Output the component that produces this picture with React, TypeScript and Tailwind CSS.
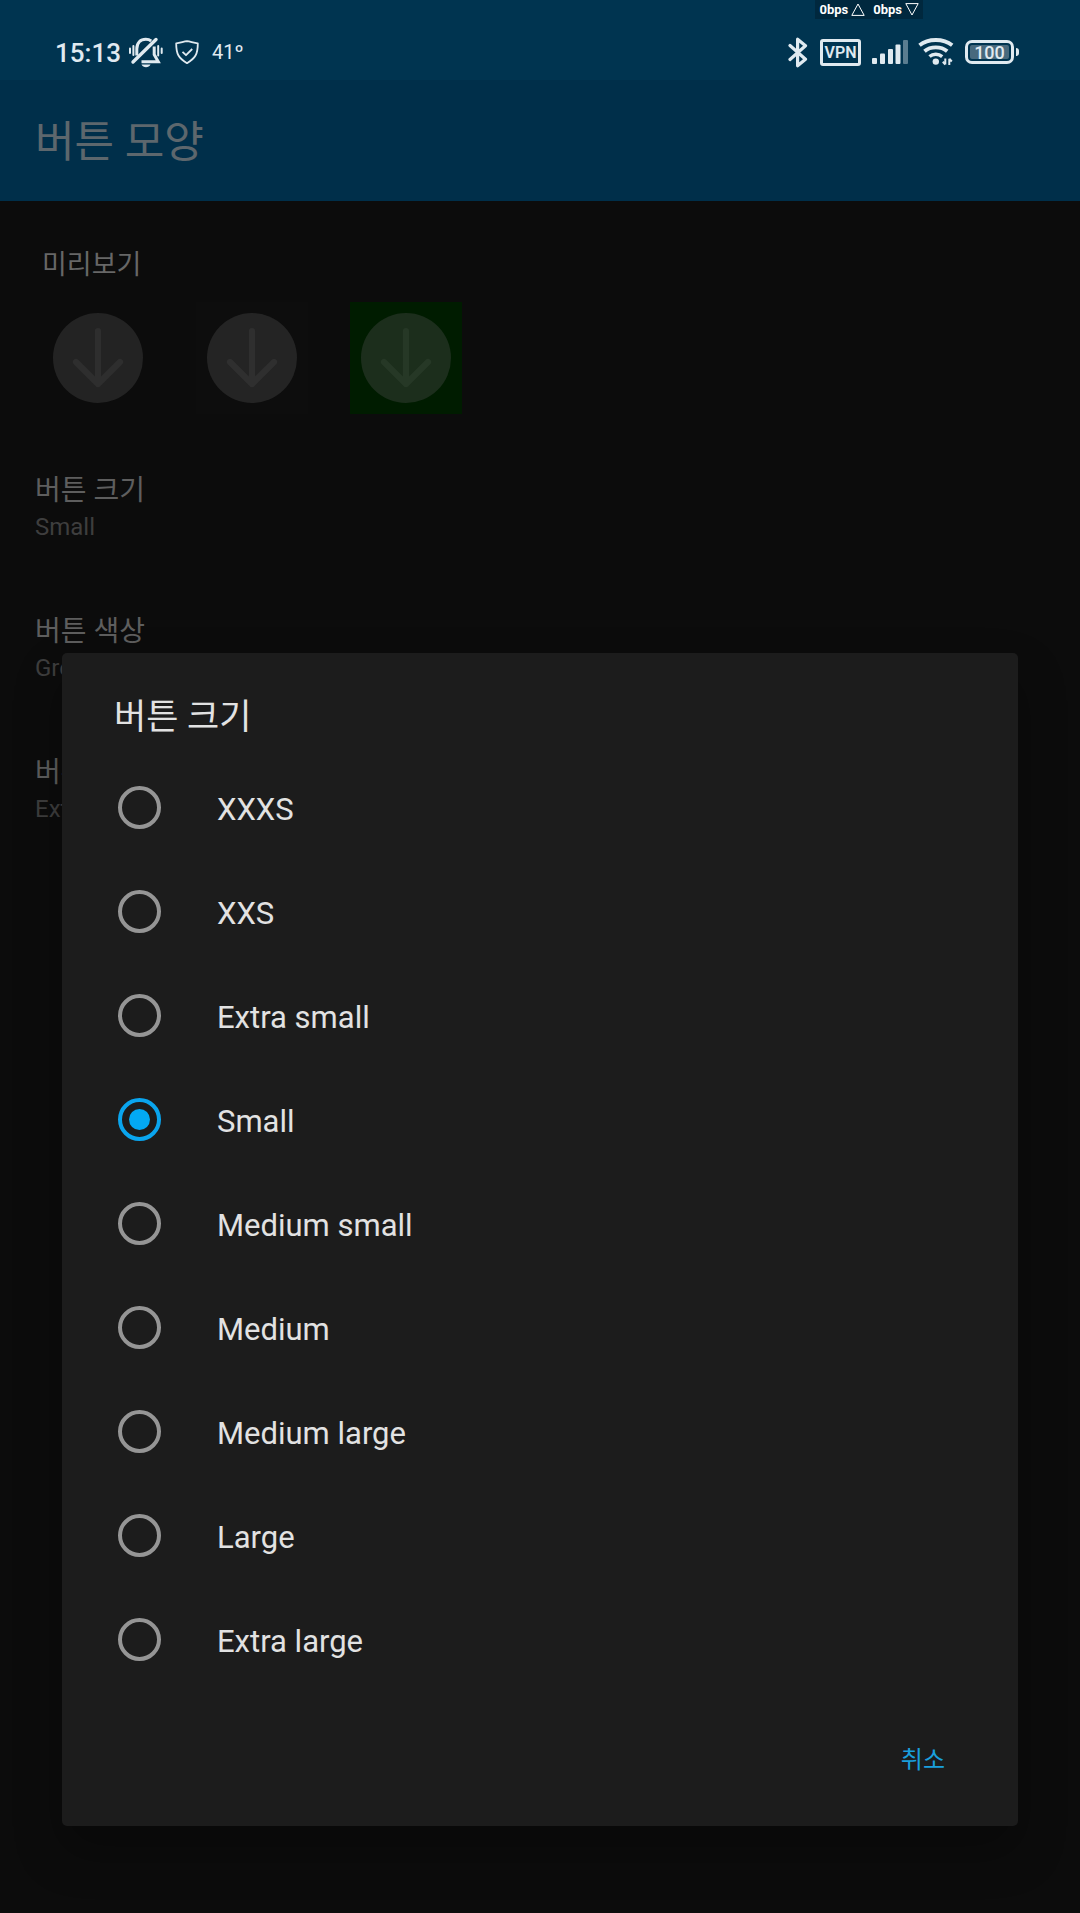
import React, { useState } from 'react';

const sizes = [
  'XXXS',
  'XXS',
  'Extra small',
  'Small',
  'Medium small',
  'Medium',
  'Medium large',
  'Large',
  'Extra large',
];

const previews = [
  { name: 'transparent', box: '', circle: 'fill-[#232323]', arrow: 'stroke-[#2e2e2e]' },
  { name: 'dark', box: 'bg-[#0d0d0d]', circle: 'fill-[#242424]', arrow: 'stroke-[#2f2f2f]' },
  { name: 'green', box: 'bg-[#001c00]', circle: 'fill-[#1c2e1c]', arrow: 'stroke-[#263826]' },
];

const preferences = [
  { title: '버튼 크기', summary: 'Small' },
  { title: '버튼 색상', summary: 'Green' },
  { title: '버튼 투명도', summary: 'Extra' },
];

const MutedBellIcon = () => (
  <svg className="w-[34px] h-[31px]" viewBox="0 0 34 31" fill="none" stroke="currentColor" strokeWidth="3" aria-hidden="true">
    <path d="M7.8 18.5V12C7.8 5.5 11.5 2.3 16.8 2.3C19 2.3 20.8 2.9 22.2 4" />
    <path d="M25.2 9.5V17.5L29.3 24.8H12.5" />
    <path d="M4 25L27 2.5" strokeWidth="3.4" strokeLinecap="round" />
    <path d="M12.5 27.6H21.5C20.6 29.4 19 30.2 17 30.2S13.4 29.4 12.5 27.6Z" fill="currentColor" stroke="none" />
    <path d="M1 11.5V16M4.4 9V18M29.2 9V18.5M32.7 11.5V16" strokeWidth="2" strokeLinecap="round" />
  </svg>
);

const ShieldIcon = () => (
  <svg className="w-6 h-6" viewBox="0 0 24 24" fill="none" stroke="currentColor" strokeWidth="1.8" strokeLinejoin="round" aria-hidden="true">
    <path d="M1.2 3.4C5 3.2 8.5 1.6 12 1.2C15.5 1.6 19 3.2 22.8 3.4C22.8 8 22.5 12 20.5 15.5C18.8 18.5 15.5 21 12 23.2C8.5 21 5.2 18.500 3.5 15.5C1.5 12 1.2 8 1.2 3.4Z" />
    <path d="M7.5 11.8L11 15.2L17.2 9" />
  </svg>
);

const BluetoothIcon = () => (
  <svg className="w-5 h-[31px]" viewBox="0 0 20 31" fill="none" stroke="currentColor" strokeWidth="3.2" strokeLinejoin="round" strokeLinecap="round" aria-hidden="true">
    <path d="M2 8.500L17.500 22.200L9.600 28.800V2.200L17.500 8.800L2 22.500" />
  </svg>
);

const SignalIcon = () => (
  <svg className="w-9 h-6" viewBox="0 0 36 24" fill="currentColor" aria-hidden="true">
    <rect x="0" y="18" width="5" height="6" rx="1" />
    <rect x="8" y="13.5" width="5" height="10.5" rx="1" />
    <rect x="16" y="9" width="5" height="15" rx="1" />
    <rect x="23.5" y="4.5" width="5" height="19.5" rx="1" />
    <rect x="31" y="0" width="5" height="24" rx="1" opacity="0.4" />
  </svg>
);

const WifiIcon = () => (
  <svg className="w-9 h-7" viewBox="0 0 36 28" fill="none" stroke="currentColor" aria-hidden="true">
    <path d="M1.5 7.3C6 3.6 11.5 2 17.8 2S29.6 3.6 34.2 7.3" strokeWidth="3.8" />
    <path d="M6.5 13.2C9.6 10.5 13.5 9.3 17.8 9.3S26 10.5 29.2 13.2" strokeWidth="3.8" />
    <path d="M11.5 18.6C13.3 17 15.4 16.3 17.8 16.3S22.3 17 24.2 18.6" strokeWidth="3.4" />
    <circle cx="17.8" cy="23.6" r="3.200" fill="currentColor" stroke="none" />
    <path d="M27.3 20.5V26.5M24.8 23.8L27.3 26.5M31.3 27V20.8M33.8 23.5L31.3 20.8" strokeWidth="2" />
  </svg>
);

const StatusBar = () => (
  <div className="relative flex h-20 items-center justify-between bg-[#003450] pt-6 pl-[55px] pr-[61px] text-[#e0eaf0]">
    <div className="absolute top-0 right-[157px] flex h-[19px] items-center gap-2 bg-[#00283e] px-1 text-[13px] leading-5 font-bold text-white">
      <span className="flex items-center gap-[3px]">
        0bps
        <svg className="w-[14px] h-[13px]" viewBox="0 0 14 13" fill="none" stroke="currentColor" aria-hidden="true">
          <path d="M7 1L13.2 12.4H0.8Z" />
        </svg>
      </span>
      <span className="flex items-center gap-[3px]">
        0bps
        <svg className="w-[14px] h-[13px]" viewBox="0 0 14 13" fill="none" stroke="currentColor" aria-hidden="true">
          <path d="M7 12L13.2 0.6H0.8Z" />
        </svg>
      </span>
    </div>
    <div className="flex items-center">
      <span className="pt-[2px] text-[26px] leading-8 font-medium">15:13</span>
      <span className="ml-2"><MutedBellIcon /></span>
      <span className="ml-3"><ShieldIcon /></span>
      <span className="ml-[13px] text-[20px] leading-8">41º</span>
    </div>
    <div className="flex items-center">
      <BluetoothIcon />
      <span className="ml-3 flex h-[27px] w-[41px] items-center justify-center rounded-[3px] border-[3px] border-current pt-[2px] text-[16px] leading-5 font-semibold">VPN</span>
      <span className="ml-[11px]"><SignalIcon /></span>
      <span className="ml-[10px]"><WifiIcon /></span>
      <span className="ml-[11px] flex h-6 w-[49px] rounded-[7px] border-[3px] border-current p-[2px]">
        <span className="flex flex-1 items-center justify-center rounded-[2px] bg-[#48697d] pt-[2px] text-[18px] leading-5 font-medium">100</span>
      </span>
      <span className="ml-[2px] h-2 w-[3px] rounded-r-sm bg-current" />
    </div>
  </div>
);

const ButtonPreview: React.FC<{ preview: (typeof previews)[number] }> = ({ preview }) => (
  <div className={`flex size-28 items-center justify-center ${preview.box}`}>
    <svg className="size-[90px]" viewBox="0 0 90 90" aria-hidden="true">
      <circle cx="45" cy="45" r="45" className={preview.circle} />
      <path
        d="M45 18V71M23 49L45 71L67 49"
        fill="none"
        strokeWidth="6.2"
        strokeLinecap="round"
        strokeLinejoin="round"
        className={preview.arrow}
      />
    </svg>
  </div>
);

export default function App() {
  const [size, setSize] = useState('Small');

  return (
    <div className="relative min-h-screen bg-[#0c0c0c] font-[Roboto,'Noto_Sans_CJK_KR',sans-serif]">
      <StatusBar />
      <header className="flex h-[121px] items-center bg-[#002f4a] px-[35px] pt-[2px]">
        <h1 className="text-[43px] leading-[60px] text-[#5d676d]">버튼 모양</h1>
      </header>

      <main>
        <section className="px-[42px] pt-11">
          <h2 className="text-[27px] leading-10 text-[#676767]">미리보기</h2>
          <div className="mt-[17px] flex gap-[42px]">
            {previews.map((preview) => (
              <ButtonPreview key={preview.name} preview={preview} />
            ))}
          </div>
        </section>
        <ul className="mt-[22px]">
          {preferences.map((pref) => (
            <li key={pref.title} className="flex h-[141px] flex-col justify-center px-[35px]">
              <span className="text-[28px] leading-10 text-[#5e5e5e]">{pref.title}</span>
              <span className="text-[24px] leading-8 text-[#3e3e3e]">{pref.summary}</span>
            </li>
          ))}
        </ul>
      </main>

      <div className="absolute inset-0 flex items-end px-[62px] pb-[87px]">
        <div
          role="dialog"
          aria-labelledby="size-title"
          className="w-full rounded-[5px] bg-[#1c1c1c] pt-[35px] pb-[34px] shadow-[0_24px_48px_rgba(0,0,0,0.3)]"
        >
          <h2 id="size-title" className="px-[52px] text-[35px] leading-[60px] text-[#e2e2e2]">
            버튼 크기
          </h2>
          <div className="mt-[7px]">
            {sizes.map((item) => (
              <label key={item} className="flex h-[104px] items-center gap-14 px-14 text-[31px] leading-10 text-[#e2e2e2]">
                <input
                  type="radio"
                  name="size"
                  value={item}
                  checked={size === item}
                  onChange={() => setSize(item)}
                  className="grid size-[43px] appearance-none place-content-center rounded-full border-4 border-[#959595] checked:border-[#0aa5ee] before:size-[21px] before:rounded-full checked:before:bg-[#03a9f4]"
                />
                <span className="pt-[5px]">{item}</span>
              </label>
            ))}
          </div>
          <div className="mt-[38px] flex justify-end px-[53px]">
            <button className="px-5 text-[24px] leading-[63px] text-[#1a9fdc]">취소</button>
          </div>
        </div>
      </div>
    </div>
  );
}
